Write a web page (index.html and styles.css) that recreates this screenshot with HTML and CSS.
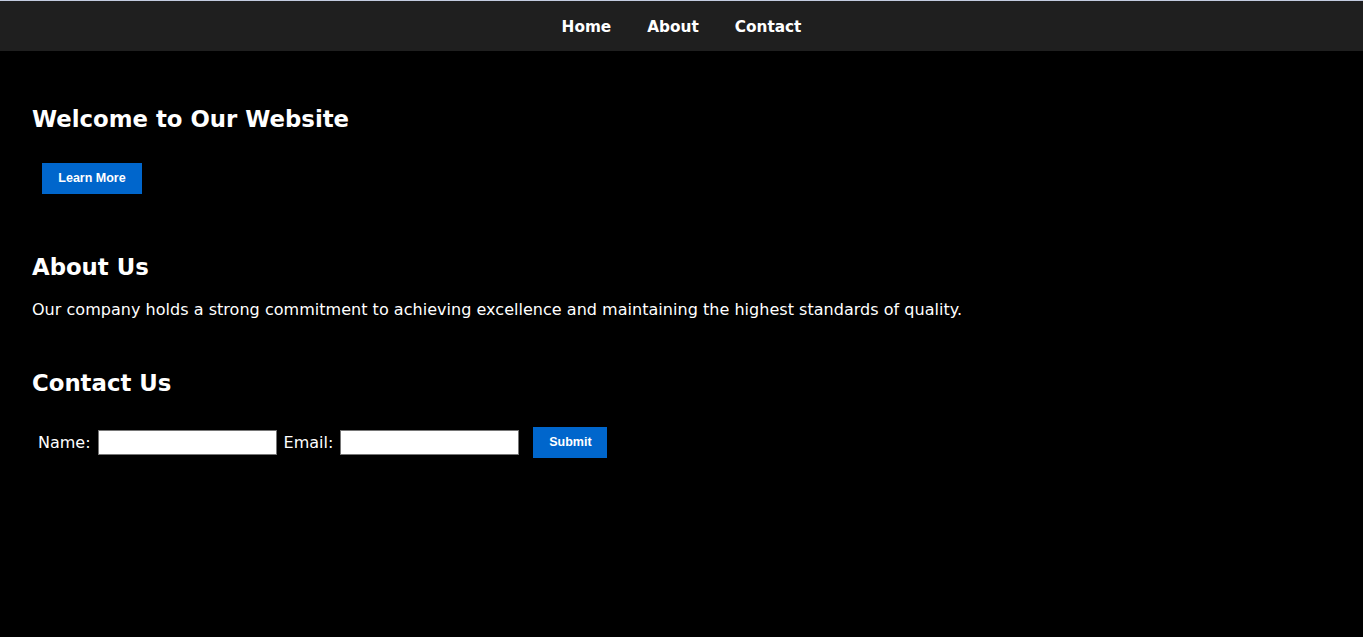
FILE: index.html
```html
<!DOCTYPE html>
<html lang="en">
<head>
<meta charset="utf-8">
<title>Welcome</title>
<link rel="stylesheet" href="styles.css">
</head>
<body>
<nav class="topnav">
  <a href="#" class="nav-link">Home</a>
  <a href="#" class="nav-link">About</a>
  <a href="#" class="nav-link">Contact</a>
</nav>
<main class="content">
  <section class="hero">
    <h2 class="heading">Welcome to Our Website</h2>
    <button class="btn btn-learn">Learn More</button>
  </section>
  <section class="about">
    <h2 class="heading">About Us</h2>
    <p class="text">Our company holds a strong commitment to achieving excellence and maintaining the highest standards of quality.</p>
  </section>
  <section class="contact">
    <h2 class="heading">Contact Us</h2>
    <form class="contact-form">
      <label class="field-label" for="name">Name:</label>
      <input class="field-input" type="text" id="name">
      <label class="field-label" for="email">Email:</label>
      <input class="field-input" type="email" id="email">
      <button class="btn btn-submit" type="submit">Submit</button>
    </form>
  </section>
</main>
</body>
</html>
```
FILE: styles.css
```css
html, body {
  margin: 0;
  padding: 0;
  background: #000;
  color: #fff;
  font-family: "DejaVu Sans", sans-serif;
}
body {
  border-top: 1px solid #c3cbe0;
  min-height: 636px;
}
.topnav {
  background: #1f1f1f;
  height: 50px;
  box-sizing: border-box;
  padding-top: 2px;
  display: flex;
  justify-content: center;
  align-items: center;
  gap: 36px;
}
.nav-link {
  color: #fff;
  text-decoration: none;
  font-weight: bold;
  font-size: 15.3px;
}
.content {
  padding: 0 32px;
}
.heading {
  font-size: 22.8px;
  line-height: 30px;
  font-weight: bold;
  margin: 0;
}
.hero {
  padding-top: 53px;
}
.hero .heading {
  margin-bottom: 29px;
}
.btn {
  background: #0066cc;
  color: #fff;
  border: none;
  font-family: "Liberation Sans", Arial, sans-serif;
  font-weight: bold;
  font-size: 12.5px;
  line-height: 15px;
  padding: 8px 0;
  cursor: pointer;
}
.btn-learn {
  width: 100px;
  margin-left: 10px;
}
.about {
  padding-top: 58px;
}
.text {
  margin: 16px 0 0;
  font-size: 16px;
  line-height: 24px;
  letter-spacing: 0.03px;
}
.contact {
  padding-top: 46px;
}
.contact-form {
  margin-top: 29px;
  padding-left: 6px;
  display: flex;
  align-items: center;
}
.field-label {
  font-size: 16px;
  margin-right: 7px;
}
.field-input {
  width: 179px;
  height: 25px;
  box-sizing: border-box;
  border: 1px solid #767676;
  background: #fff;
  padding: 0 4px;
  margin: 0 7px 0 0;
}
.btn-submit {
  width: 74px;
  margin-left: 7px;
}
```
